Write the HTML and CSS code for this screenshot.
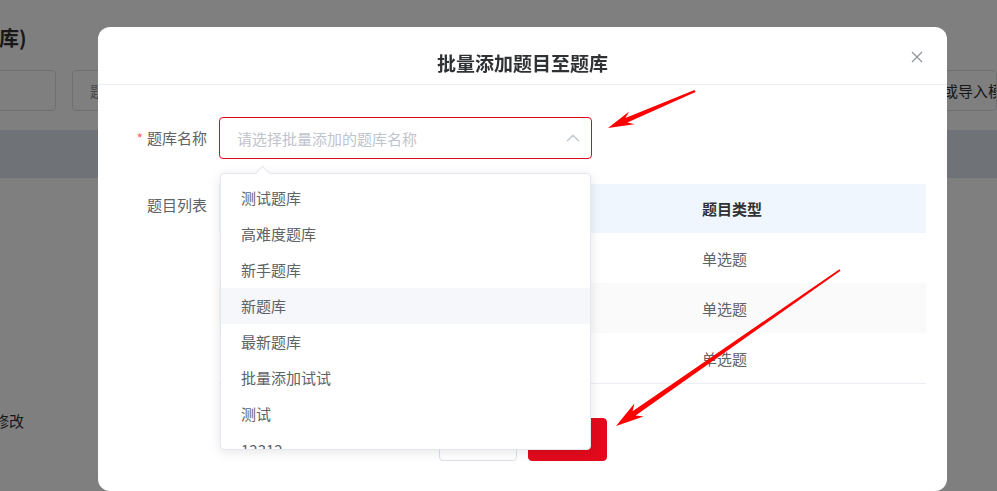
FILE: index.html
```html
<!DOCTYPE html>
<html lang="zh">
<head>
<meta charset="utf-8">
<title>批量添加题目至题库</title>
<link rel="stylesheet" href="styles.css">
</head>
<body>
<div class="page">
  <div class="page-title">库)</div>
  <div class="page-toolbar">
    <div class="pbox pbox-1"></div>
    <div class="pbox pbox-2">题目名称</div>
    <div class="pbox pbox-3">下载或导入模板</div>
  </div>
  <div class="page-band"></div>
  <div class="page-text">修改</div>
</div>

<div class="mask"></div>

<div class="dialog">
  <div class="dialog-header">
    <span class="dialog-title">批量添加题目至题库</span>
    <svg class="dialog-close" width="12" height="12" viewBox="0 0 12 12"><path d="M1 1 L11 11 M11 1 L1 11" stroke="#909399" stroke-width="1.2" fill="none"/></svg>
  </div>
  <div class="dialog-body">
    <div class="form-item">
      <label class="form-label"><span class="req">*</span>题库名称</label>
      <div class="select-wrap">
        <div class="select">
          <span class="placeholder">请选择批量添加的题库名称</span>
          <svg class="chev" width="14" height="8" viewBox="0 0 14 8"><polyline points="1,7 7,1.5 13,7" stroke="#c0c4cc" stroke-width="1.3" fill="none"/></svg>
        </div>
        <div class="dropdown">
          <div class="dropdown-arrow"></div>
          <ul class="options">
            <li>测试题库</li>
            <li>高难度题库</li>
            <li>新手题库</li>
            <li class="hover">新题库</li>
            <li>最新题库</li>
            <li>批量添加试试</li>
            <li>测试</li>
            <li>12312</li>
          </ul>
        </div>
      </div>
    </div>
    <div class="form-item form-item-table">
      <label class="form-label">题目列表</label>
      <div class="table">
        <div class="tr th"><div class="td"></div><div class="td">题目类型</div></div>
        <div class="tr"><div class="td"></div><div class="td">单选题</div></div>
        <div class="tr stripe"><div class="td"></div><div class="td">单选题</div></div>
        <div class="tr last"><div class="td"></div><div class="td">单选题</div></div>
      </div>
    </div>
    <div class="dialog-footer">
      <button class="btn btn-cancel">取消</button>
      <button class="btn btn-primary">确定</button>
    </div>
  </div>
</div>

<svg class="annot" width="997" height="491" viewBox="0 0 997 491">
  <polygon fill="#ff0000" points="694.5,89.9 625.4,117.9 629.2,111.4 608,128 634.6,124.2 627.4,122.5 695.5,92.1"/>
  <polygon fill="#ff0000" points="839.5,269.2 632.6,411.2 634.4,403.4 616,426 643.6,416.6 635.6,415.6 840.5,270.8"/>
</svg>
</body>
</html>
```

FILE: styles.css
```css
html, body {
  margin: 0;
  padding: 0;
  width: 997px;
  height: 491px;
  overflow: hidden;
}
body {
  font-family: "Noto Sans CJK SC", "Noto Sans", sans-serif;
  background: #ffffff;
  color: #303133;
  position: relative;
}

/* background page */
.page {
  padding-top: 26px;
}
.page-title {
  font-size: 20px;
  font-weight: 700;
  line-height: 24px;
  color: #303133;
  margin-left: -1px;
}
.page-toolbar {
  display: flex;
  gap: 16px;
  margin-top: 20px;
  height: 41px;
}
.pbox {
  box-sizing: border-box;
  height: 41px;
  border: 1px solid #dcdfe6;
  border-radius: 4px;
  font-size: 15px;
  line-height: 39px;
  color: #909399;
  white-space: nowrap;
  overflow: hidden;
}
.pbox-1 { width: 64px; margin-left: -8px; }
.pbox-2 { width: 794px; padding-left: 17px; }
.pbox-3 { flex: 1; padding-left: 30px; color: #303133; min-width: 0; }
.page-band {
  margin-top: 19px;
  height: 48px;
  background: #dee6ee;
}
.page-text {
  margin-top: 233px;
  font-size: 15px;
  line-height: 20px;
  margin-left: -6px;
}

.mask {
  position: fixed;
  inset: 0;
  background: rgba(0, 0, 0, 0.5);
}

/* dialog */
.dialog {
  position: absolute;
  left: 98px;
  top: 27px;
  width: 849px;
  height: 464px;
  background: #fff;
  border-radius: 12px;
}
.dialog-header {
  position: relative;
  padding: 24px 0 9px;
  text-align: center;
  border-bottom: 1px solid #ebeef5;
}
.dialog-title {
  font-size: 19px;
  line-height: 24px;
  font-weight: 700;
  color: #303133;
  display: block;
}
.dialog-close {
  position: absolute;
  right: 24px;
  top: 24px;
}
.dialog-body {
  padding: 32px 21px 0 20px;
}
.form-item {
  display: flex;
  margin-bottom: 25px;
}
.form-item-table { margin-bottom: 0; }
.form-label {
  width: 101px;
  flex: none;
  box-sizing: border-box;
  padding-right: 12px;
  text-align: right;
  font-size: 15px;
  line-height: 42px;
  color: #606266;
}
.req {
  color: #f56c6c;
  margin-right: 4px;
  font-size: 14px;
}
.select-wrap {
  position: relative;
  width: 373px;
}
.select {
  box-sizing: border-box;
  height: 42px;
  border: 1px solid #e0081c;
  border-radius: 4px;
  display: flex;
  align-items: center;
  justify-content: space-between;
  padding: 0 11px 0 17px;
}
.placeholder {
  font-size: 15px;
  color: #c0c4cc;
}
.chev { display: block; margin-top: -1px; }

.dropdown {
  position: absolute;
  top: 56px;
  left: 1px;
  width: 371px;
  height: 277px;
  box-sizing: border-box;
  background: #fff;
  border: 1px solid #e4e7ed;
  border-radius: 4px;
  box-shadow: 0 2px 12px rgba(0, 0, 0, 0.1);
  z-index: 5;
}
.dropdown-arrow {
  position: absolute;
  top: -6px;
  left: 36px;
  width: 10px;
  height: 10px;
  background: #fff;
  border-top: 1px solid #e4e7ed;
  border-left: 1px solid #e4e7ed;
  transform: rotate(45deg);
}
.options {
  list-style: none;
  margin: 0;
  padding: 6px 0 0;
  height: 100%;
  box-sizing: border-box;
  overflow: hidden;
  position: relative;
  border-radius: 4px;
}
.options li {
  height: 36px;
  line-height: 36px;
  padding-left: 20px;
  font-size: 15px;
  color: #606266;
}
.options li.hover { background: #f5f7fa; }

/* table */
.table {
  width: 707px;
  font-size: 15px;
}
.tr {
  display: grid;
  grid-template-columns: 1fr 236px;
  height: 50px;
  align-items: center;
  color: #606266;
}
.tr.th {
  height: 49px;
  background: #eff6fe;
  font-weight: 700;
  color: #303133;
}
.tr.stripe { background: #fafafa; }
.tr.last { border-bottom: 1px solid #ebeef5; }
.td { padding: 0 12px; }

.dialog-footer {
  display: flex;
  justify-content: center;
  gap: 11px;
  margin-top: 34px;
  margin-left: -20px;
  margin-right: -21px;
}
.btn {
  height: 43px;
  width: 78px;
  border-radius: 4px;
  font-family: inherit;
  font-size: 15px;
  cursor: pointer;
}
.btn-cancel {
  background: #fff;
  border: 1px solid #dcdfe6;
  color: #606266;
}
.btn-primary {
  width: 79px;
  background: #e20a1c;
  border: 1px solid #e20a1c;
  color: #fff;
}

.annot {
  position: absolute;
  left: 0;
  top: 0;
  z-index: 10;
  pointer-events: none;
}
```
